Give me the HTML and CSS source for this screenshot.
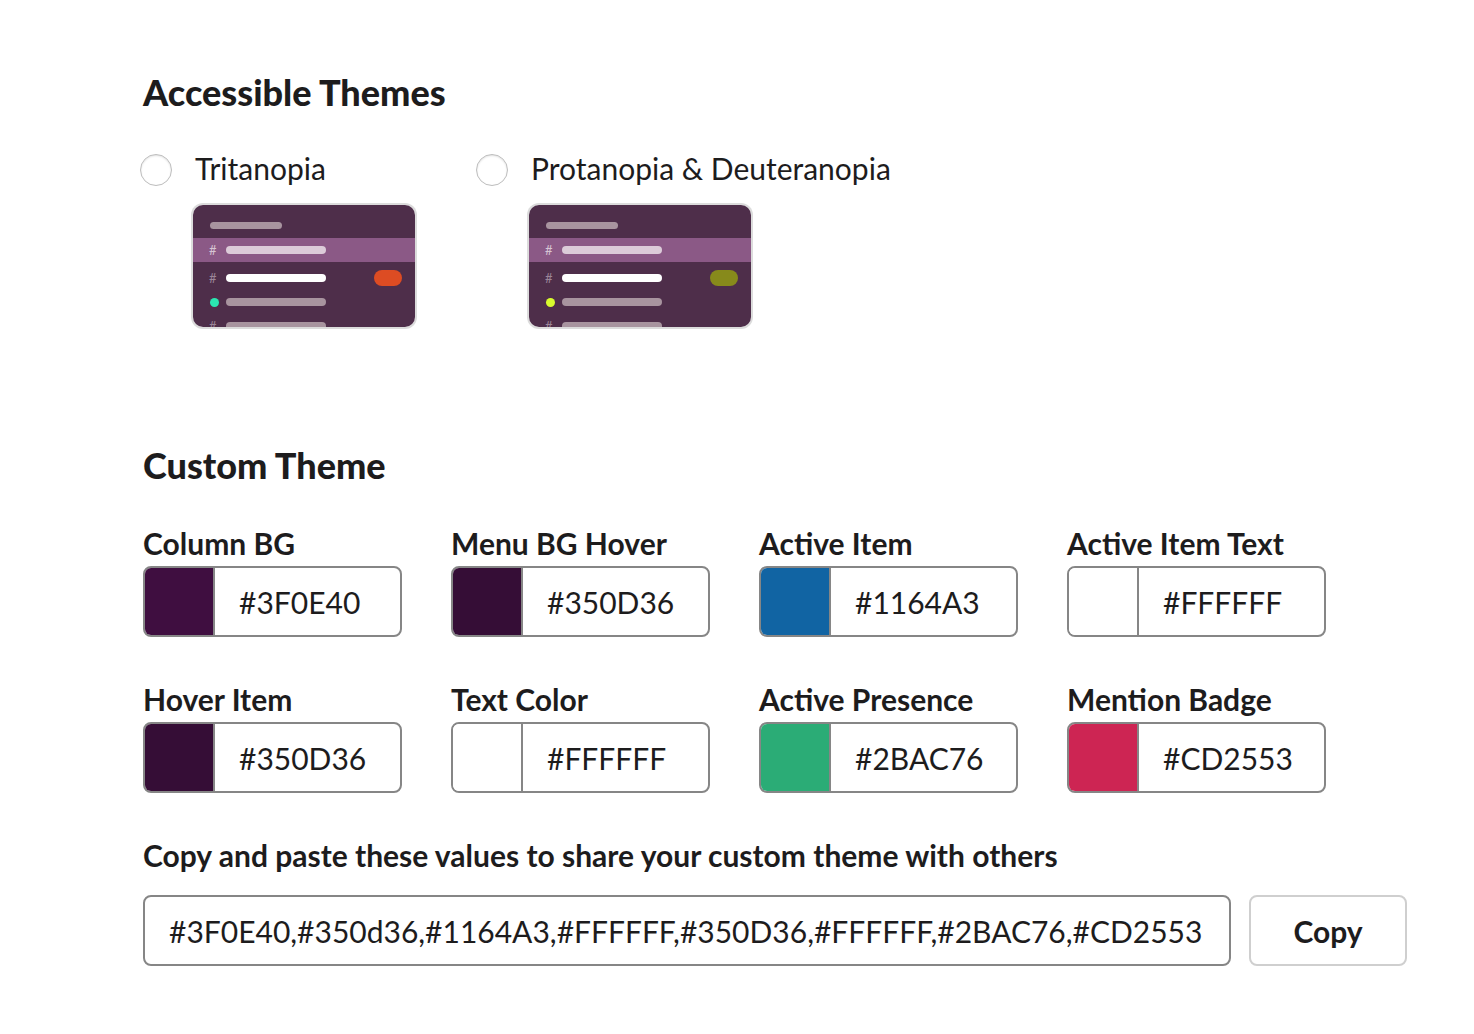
FILE: index.html
```html
<!DOCTYPE html>
<html>

<head>
  <title>Themes</title>
  <link rel="stylesheet" href="styles.css">
</head>

<body>
  <div class="page">
    <h2 class="section-title">Accessible Themes</h2>
    <div class="theme-options">
      <div class="theme-option">
        <label class="theme-label">
          <span class="radio"></span>
          <span class="theme-name">Tritanopia</span>
        </label>
        <div class="preview">
          <svg width="222" height="122" viewBox="0 0 222 122">
            <rect x="0" y="0" width="222" height="122" fill="#4e2e4a"/>
            <rect x="17" y="17" width="72" height="7" rx="3.5" fill="#a8949f"/>
            <rect x="0" y="33" width="222" height="24" fill="#8b5986"/>
            <text x="16" y="50" class="preview-hash" fill="#d6c4d3">#</text>
            <rect x="33" y="41" width="100" height="8" rx="4" fill="#dccbd9"/>
            <text x="16" y="78" class="preview-hash" fill="#9b8598">#</text>
            <rect x="33" y="69" width="100" height="8" rx="4" fill="#ffffff"/>
            <rect x="181" y="65" width="28" height="16" rx="8" fill="#dd4c23"/>
            <circle cx="21.5" cy="97.5" r="4.5" fill="#2be6b1"/>
            <rect x="33" y="93" width="100" height="8" rx="4" fill="#a8949f"/>
            <text x="16" y="126" class="preview-hash" fill="#9b8598">#</text>
            <rect x="33" y="117" width="100" height="8" rx="4" fill="#a8949f"/>
          </svg>
        </div>
      </div>
      <div class="theme-option">
        <label class="theme-label">
          <span class="radio"></span>
          <span class="theme-name">Protanopia &amp; Deuteranopia</span>
        </label>
        <div class="preview">
          <svg width="222" height="122" viewBox="0 0 222 122">
            <rect x="0" y="0" width="222" height="122" fill="#4e2e4a"/>
            <rect x="17" y="17" width="72" height="7" rx="3.5" fill="#a8949f"/>
            <rect x="0" y="33" width="222" height="24" fill="#8b5986"/>
            <text x="16" y="50" class="preview-hash" fill="#d6c4d3">#</text>
            <rect x="33" y="41" width="100" height="8" rx="4" fill="#dccbd9"/>
            <text x="16" y="78" class="preview-hash" fill="#9b8598">#</text>
            <rect x="33" y="69" width="100" height="8" rx="4" fill="#ffffff"/>
            <rect x="181" y="65" width="28" height="16" rx="8" fill="#878a1b"/>
            <circle cx="21.5" cy="97.5" r="4.5" fill="#d8fb2e"/>
            <rect x="33" y="93" width="100" height="8" rx="4" fill="#a8949f"/>
            <text x="16" y="126" class="preview-hash" fill="#9b8598">#</text>
            <rect x="33" y="117" width="100" height="8" rx="4" fill="#a8949f"/>
          </svg>
        </div>
      </div>
    </div>

    <h2 class="section-title custom-title">Custom Theme</h2>
    <div class="color-grid">
      <div class="color-field">
        <div class="field-label">Column BG</div>
        <div class="color-input">
          <span class="swatch swatch-column-bg"></span>
          <span class="hex">#3F0E40</span>
        </div>
      </div>
      <div class="color-field">
        <div class="field-label">Menu BG Hover</div>
        <div class="color-input">
          <span class="swatch swatch-menu-hover"></span>
          <span class="hex">#350D36</span>
        </div>
      </div>
      <div class="color-field">
        <div class="field-label">Active Item</div>
        <div class="color-input">
          <span class="swatch swatch-active-item"></span>
          <span class="hex">#1164A3</span>
        </div>
      </div>
      <div class="color-field">
        <div class="field-label">Active Item Text</div>
        <div class="color-input">
          <span class="swatch swatch-white"></span>
          <span class="hex">#FFFFFF</span>
        </div>
      </div>
      <div class="color-field">
        <div class="field-label">Hover Item</div>
        <div class="color-input">
          <span class="swatch swatch-menu-hover"></span>
          <span class="hex">#350D36</span>
        </div>
      </div>
      <div class="color-field">
        <div class="field-label">Text Color</div>
        <div class="color-input">
          <span class="swatch swatch-white"></span>
          <span class="hex">#FFFFFF</span>
        </div>
      </div>
      <div class="color-field">
        <div class="field-label">Active Presence</div>
        <div class="color-input">
          <span class="swatch swatch-presence"></span>
          <span class="hex">#2BAC76</span>
        </div>
      </div>
      <div class="color-field">
        <div class="field-label">Mention Badge</div>
        <div class="color-input">
          <span class="swatch swatch-mention"></span>
          <span class="hex">#CD2553</span>
        </div>
      </div>
    </div>

    <div class="field-label share-label">Copy and paste these values to share your custom theme with others</div>
    <div class="share-row">
      <div class="share-input">#3F0E40,#350d36,#1164A3,#FFFFFF,#350D36,#FFFFFF,#2BAC76,#CD2553</div>
      <button class="copy-button">Copy</button>
    </div>
  </div>
</body>

</html>
```

FILE: styles.css
```css
body {
  margin: 0;
  background: #ffffff;
  color: #1d1c1d;
  font-family: Lato, "Noto Sans", sans-serif;
}

.page {
  padding: 71px 0 0 143px;
}

.section-title {
  margin: 0;
  font-size: 36px;
  font-weight: 900;
  line-height: 42px;
}

.custom-title {
  margin-top: 117px;
}

.theme-options {
  display: flex;
  margin-top: 37px;
  margin-left: -3px;
}

.theme-option {
  width: 336px;
}

.theme-label {
  display: flex;
  align-items: flex-start;
  white-space: nowrap;
}

.radio {
  flex: none;
  width: 32px;
  height: 32px;
  margin-top: 4px;
  box-sizing: border-box;
  border: 1px solid #bdbdbd;
  border-radius: 50%;
  box-shadow: inset 0 1px 2px rgba(0, 0, 0, 0.12);
}

.theme-name {
  margin-left: 23px;
  font-size: 30px;
  line-height: 36px;
}

.preview {
  width: 222px;
  height: 122px;
  margin: 19px 0 0 53px;
  border-radius: 10px;
  overflow: hidden;
  box-shadow: 0 0 0 2px #dcdcdc;
}

.preview svg {
  display: block;
}

.preview-hash {
  font-family: Lato, sans-serif;
  font-size: 13px;
}

.color-grid {
  display: grid;
  grid-template-columns: repeat(4, 259px);
  column-gap: 49px;
  row-gap: 45px;
  margin-top: 40px;
}

.field-label {
  font-size: 30px;
  font-weight: 700;
  line-height: 34px;
  white-space: nowrap;
}

.color-input {
  display: flex;
  align-items: center;
  height: 71px;
  margin-top: 6px;
  box-sizing: border-box;
  border: 2px solid #868686;
  border-radius: 8px;
  overflow: hidden;
}

.swatch {
  width: 68px;
  height: 100%;
  border-right: 2px solid #868686;
}

.swatch-column-bg {
  background: #3f0e40;
}

.swatch-menu-hover {
  background: #350d36;
}

.swatch-active-item {
  background: #1164a3;
}

.swatch-white {
  background: #ffffff;
}

.swatch-presence {
  background: #2bac76;
}

.swatch-mention {
  background: #cd2553;
}

.hex {
  padding-left: 24px;
  font-size: 30px;
}

.share-label {
  margin-top: 45px;
}

.share-row {
  display: flex;
  gap: 18px;
  margin-top: 23px;
}

.share-input {
  display: flex;
  align-items: center;
  width: 1088px;
  height: 71px;
  padding-left: 24px;
  box-sizing: border-box;
  border: 2px solid #868686;
  border-radius: 8px;
  font-size: 30px;
  white-space: nowrap;
}

.copy-button {
  width: 158px;
  height: 71px;
  box-sizing: border-box;
  border: 2px solid #cfcfcf;
  border-radius: 8px;
  background: #ffffff;
  color: #1d1c1d;
  font-family: Lato, sans-serif;
  font-size: 30px;
  font-weight: 700;
}
```
